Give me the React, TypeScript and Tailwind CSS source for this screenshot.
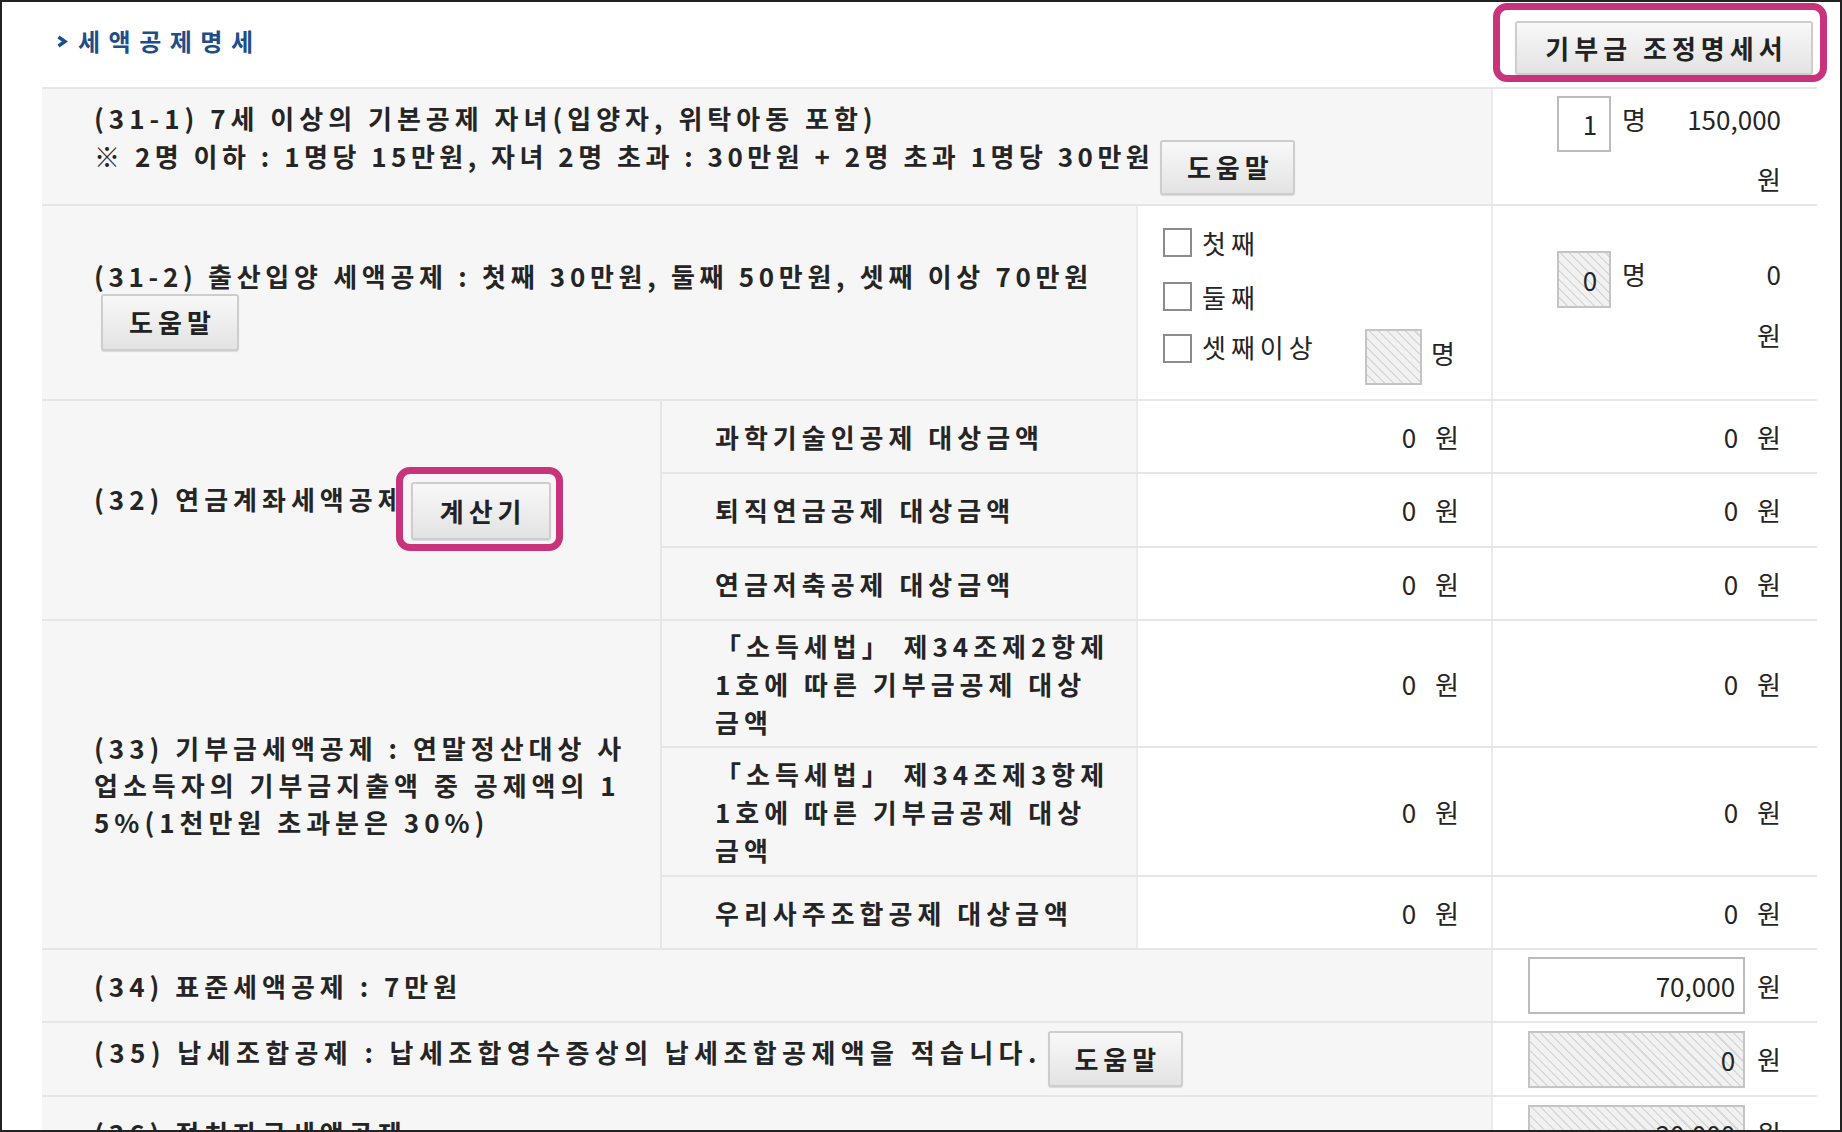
import type { ReactNode } from 'react'

const hatch =
  'bg-[image:repeating-linear-gradient(45deg,#f1f1f1_0px,#f1f1f1_5px,#d9d9d9_5px,#d9d9d9_6.5px)]'

function GrayButton({ children, className = '' }: { children: ReactNode; className?: string }) {
  return (
    <button
      type="button"
      className={`flex shrink-0 items-center justify-center rounded-[3px] border-2 border-[#cdcdcd] bg-linear-to-b from-[#f8f8f8] to-[#e3e3e3] pl-[5px] font-bold text-[#222] shadow-[0_1px_1px_rgba(0,0,0,0.12)] ${className}`}
    >
      {children}
    </button>
  )
}

// highlight frame drawn over a button
function Marker({ className = '' }: { className?: string }) {
  return (
    <span
      className={`pointer-events-none absolute z-10 rounded-[14px] border-[7px] border-[#c8337c] ${className}`}
    />
  )
}

function Won({ value }: { value: string }) {
  return (
    <>
      <span className="tracking-[0px]">{value}</span>
      <span className="ml-[19px] tracking-[0px]">원</span>
    </>
  )
}

function SubRow({ h, label, v1, v2 }: { h: string; label: ReactNode; v1: string; v2: string }) {
  return (
    <div className={`flex border-b-2 border-[#e6e6e6] ${h}`}>
      <div className="flex w-[476px] shrink-0 items-center border-r-2 border-[#ebebeb] bg-[#f6f6f6] pl-[53px] font-bold">
        {label}
      </div>
      <div className="flex w-[355px] shrink-0 items-center justify-end border-r-2 border-[#ebebeb] pr-[32px]">
        <Won value={v1} />
      </div>
      <div className="flex flex-1 items-center justify-end pr-[36px]">
        <Won value={v2} />
      </div>
    </div>
  )
}

function Checkbox() {
  return <div className="h-[29px] w-[29px] shrink-0 border-2 border-[#8c8c8c] bg-white" />
}

export default function App() {
  return (
    <div className="h-[1132px] w-[1842px] overflow-hidden border-2 border-[#222] bg-white font-['Noto_Sans_CJK_KR','Noto_Sans',sans-serif] text-[26px] leading-[38px] tracking-[5px] text-[#252525]">
      <div className="pl-[40px] pr-[23px]">
        {/* Header */}
        <div className="flex h-[85px] items-center justify-between pl-[14px] pr-[4px]">
          <div className="mb-[7px] flex items-center text-[24px] font-bold tracking-[8.5px] text-[#1d4e8a]">
            <svg width="12" height="13" viewBox="0 0 12 13" className="mt-[1px]">
              <path d="M2.5 2 L9 6.5 L2.5 11" fill="none" stroke="#1d4e8a" strokeWidth="3.4" />
            </svg>
            <span className="ml-[10px]">세액공제명세</span>
          </div>
          <div className="relative mt-[7px]">
            <GrayButton className="h-[54px] w-[298px]">기부금 조정명세서</GrayButton>
            <Marker className="-left-[22px] -top-[18px] h-[79px] w-[334px]" />
          </div>
        </div>

        {/* Table */}
        <div className="flex flex-col border-t-2 border-[#e6e6e6]">
          {/* 31-1 */}
          <div className="flex h-[117px] border-b-2 border-[#e6e6e6]">
            <div className="flex w-[1451px] shrink-0 flex-col justify-center whitespace-nowrap border-r-2 border-[#ebebeb] bg-[#f6f6f6] pl-[52px] font-bold">
              <div>(31-1) 7세 이상의 기본공제 자녀(입양자, 위탁아동 포함)</div>
              <div className="flex items-start">
                <span className="tracking-[4.5px]">
                  ※ 2명 이하 : 1명당 15만원, 자녀 2명 초과 : 30만원 + 2명 초과 1명당 30만원
                </span>
                <GrayButton className="ml-[6px] mt-[3px] h-[55px] w-[135px]">도움말</GrayButton>
              </div>
            </div>
            <div className="flex flex-1 flex-col items-end justify-center pr-[36px]">
              <div className="flex items-start">
                <div className="h-[56px] w-[54px] border-2 border-[#bcbcbc] bg-white pr-[12px] text-right leading-[52px] tracking-[0px]">
                  1
                </div>
                <span className="ml-[11px] mt-[4px]">명</span>
                <span className="ml-[12px] mt-[4px] w-[118px] text-right tracking-[0px]">150,000</span>
              </div>
              <span className="mt-[8px] tracking-[0px]">원</span>
            </div>
          </div>

          {/* 31-2 */}
          <div className="flex h-[195px] border-b-2 border-[#e6e6e6]">
            <div className="flex w-[1096px] shrink-0 flex-col items-start justify-center whitespace-nowrap border-r-2 border-[#ebebeb] bg-[#f6f6f6] pl-[52px] pt-[2px] font-bold">
              <div className="tracking-[4.7px]">
                (31-2) 출산입양 세액공제 : 첫째 30만원, 둘째 50만원, 셋째 이상 70만원
              </div>
              <GrayButton className="-mt-[1px] ml-[7px] h-[57px] w-[138px]">도움말</GrayButton>
            </div>
            <div className="flex w-[355px] shrink-0 flex-col border-r-2 border-[#ebebeb] pl-[25px] pt-[22px]">
              <div className="flex h-[29px] items-center">
                <Checkbox />
                <span className="ml-[10px]">첫째</span>
              </div>
              <div className="mt-[25px] flex h-[29px] items-center">
                <Checkbox />
                <span className="ml-[10px]">둘째</span>
              </div>
              <div className="mt-[23px] flex items-start">
                <Checkbox />
                <span className="-mt-[6px] ml-[10px] w-[163px]">셋째이상</span>
                <div className={`-mt-[5px] h-[56px] w-[57px] shrink-0 border-2 border-[#c4c4c4] ${hatch}`} />
                <span className="ml-[9px]">명</span>
              </div>
            </div>
            <div className="flex flex-1 flex-col items-end justify-center pr-[36px]">
              <div className="flex items-start">
                <div
                  className={`h-[57px] w-[54px] border-2 border-[#c4c4c4] pr-[12px] text-right leading-[53px] tracking-[0px] ${hatch}`}
                >
                  0
                </div>
                <span className="ml-[11px] mt-[4px]">명</span>
                <span className="ml-[12px] mt-[4px] w-[118px] text-right tracking-[0px]">0</span>
              </div>
              <span className="mt-[8px] tracking-[0px]">원</span>
            </div>
          </div>

          {/* 32 */}
          <div className="flex">
            <div className="flex w-[620px] shrink-0 items-center whitespace-nowrap border-b-2 border-r-2 border-[#e6e6e6] bg-[#f6f6f6] pl-[52px] font-bold">
              <div className="flex items-start">
                <span>(32) 연금계좌세액공제</span>
                <div className="relative ml-[4px] mt-[2px]">
                  <GrayButton className="h-[58px] w-[140px]">계산기</GrayButton>
                  <Marker className="-left-[15px] -top-[15px] h-[84px] w-[167px]" />
                </div>
              </div>
            </div>
            <div className="flex flex-1 flex-col whitespace-nowrap">
              <SubRow h="h-[73px]" label="과학기술인공제 대상금액" v1="0" v2="0" />
              <SubRow h="h-[74px]" label="퇴직연금공제 대상금액" v1="0" v2="0" />
              <SubRow h="h-[73px]" label="연금저축공제 대상금액" v1="0" v2="0" />
            </div>
          </div>

          {/* 33 */}
          <div className="flex">
            <div className="flex w-[620px] shrink-0 items-center whitespace-nowrap border-b-2 border-r-2 border-[#e6e6e6] bg-[#f6f6f6] pl-[52px] font-bold leading-[37px]">
              <div>
                (33) 기부금세액공제 : 연말정산대상 사
                <br />
                업소득자의 기부금지출액 중 공제액의 1
                <br />
                5%(1천만원 초과분은 30%)
              </div>
            </div>
            <div className="flex flex-1 flex-col whitespace-nowrap">
              <SubRow
                h="h-[127px]"
                label={
                  <div>
                    「소득세법」 제34조제2항제
                    <br />
                    1호에 따른 기부금공제 대상
                    <br />
                    금액
                  </div>
                }
                v1="0"
                v2="0"
              />
              <SubRow
                h="h-[129px]"
                label={
                  <div>
                    「소득세법」 제34조제3항제
                    <br />
                    1호에 따른 기부금공제 대상
                    <br />
                    금액
                  </div>
                }
                v1="0"
                v2="0"
              />
              <SubRow h="h-[73px]" label="우리사주조합공제 대상금액" v1="0" v2="0" />
            </div>
          </div>

          {/* 34 */}
          <div className="flex h-[73px] border-b-2 border-[#e6e6e6] whitespace-nowrap">
            <div className="flex w-[1451px] shrink-0 items-center border-r-2 border-[#ebebeb] bg-[#f6f6f6] pl-[52px] font-bold">
              (34) 표준세액공제 : 7만원
            </div>
            <div className="flex flex-1 items-center justify-end pr-[36px]">
              <div className="h-[57px] w-[217px] border-2 border-[#bcbcbc] bg-white pr-[8px] text-right leading-[53px] tracking-[0px]">
                70,000
              </div>
              <span className="ml-[12px] tracking-[0px]">원</span>
            </div>
          </div>

          {/* 35 */}
          <div className="flex h-[74px] border-b-2 border-[#e6e6e6] whitespace-nowrap">
            <div className="flex w-[1451px] shrink-0 items-center border-r-2 border-[#ebebeb] bg-[#f6f6f6] pl-[52px] font-bold">
              <div className="flex items-start">
                <span className="mt-[2px] tracking-[5.4px]">
                  (35) 납세조합공제 : 납세조합영수증상의 납세조합공제액을 적습니다.
                </span>
                <GrayButton className="ml-[6px] h-[56px] w-[135px]">도움말</GrayButton>
              </div>
            </div>
            <div className="flex flex-1 items-center justify-end pr-[36px]">
              <div
                className={`h-[57px] w-[217px] border-2 border-[#c4c4c4] pr-[8px] text-right leading-[53px] tracking-[0px] ${hatch}`}
              >
                0
              </div>
              <span className="ml-[12px] tracking-[0px]">원</span>
            </div>
          </div>

          {/* 36 */}
          <div className="flex h-[74px] border-b-2 border-[#e6e6e6] whitespace-nowrap">
            <div className="flex w-[1451px] shrink-0 items-center border-r-2 border-[#ebebeb] bg-[#f6f6f6] pl-[52px] font-bold">
              (36) 정치자금세액공제
            </div>
            <div className="flex flex-1 items-center justify-end pr-[36px]">
              <div
                className={`h-[57px] w-[217px] border-2 border-[#c4c4c4] pr-[8px] text-right leading-[53px] tracking-[0px] ${hatch}`}
              >
                20,000
              </div>
              <span className="ml-[12px] tracking-[0px]">원</span>
            </div>
          </div>
        </div>
      </div>
    </div>
  )
}
